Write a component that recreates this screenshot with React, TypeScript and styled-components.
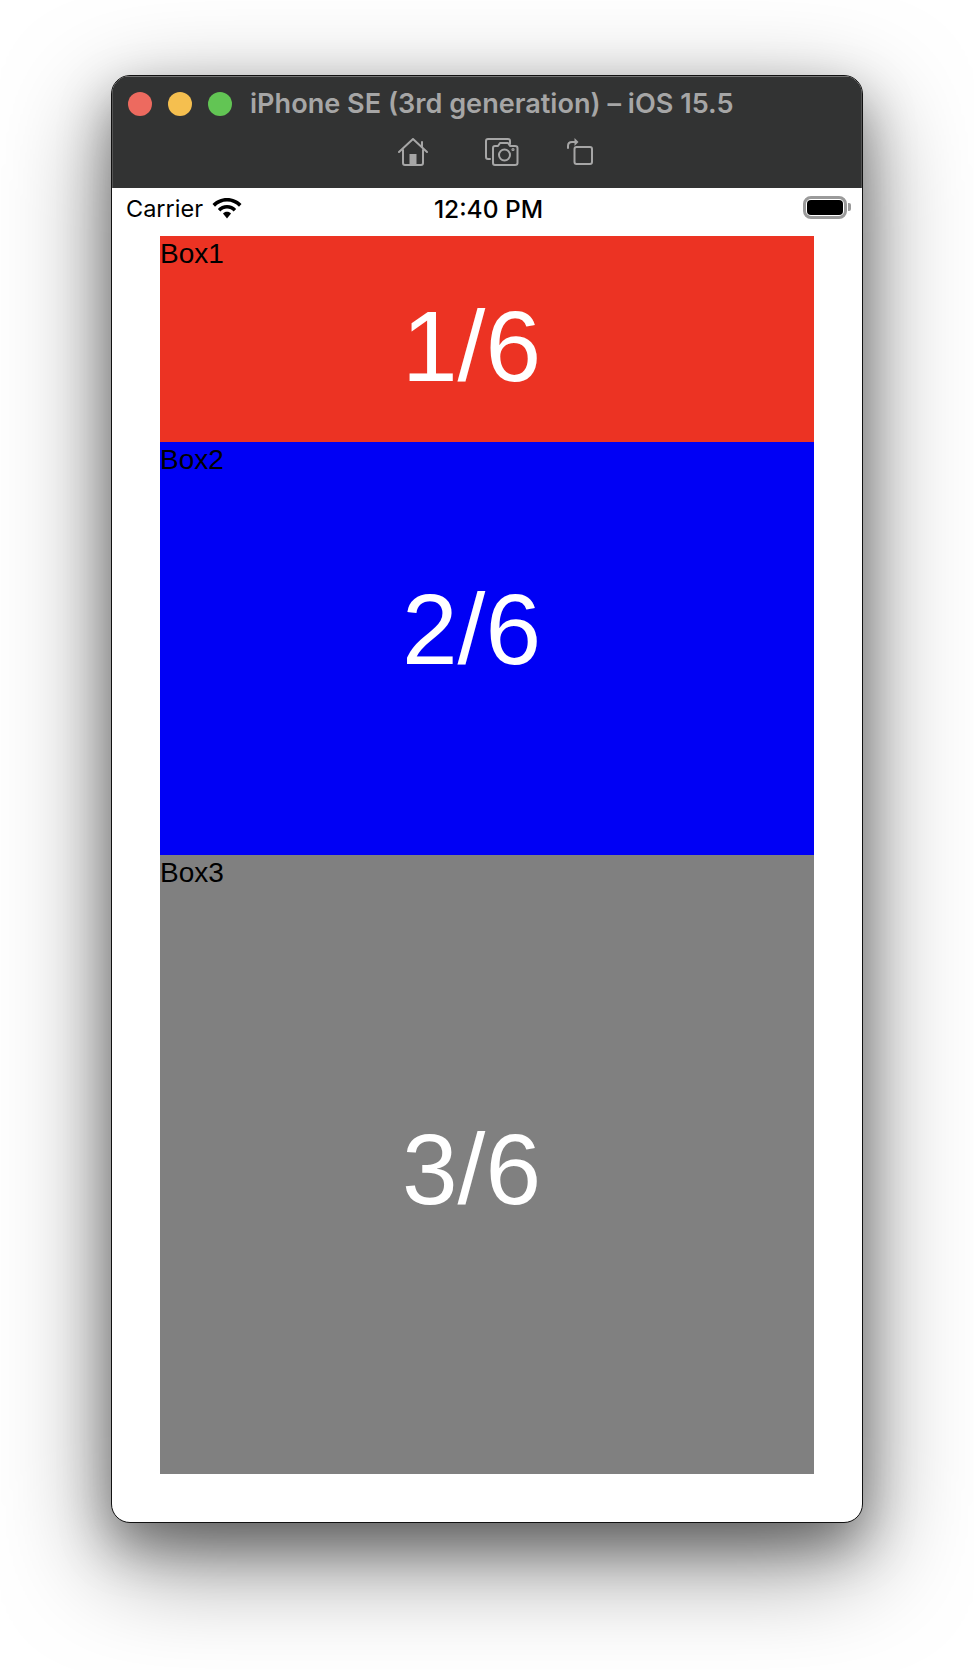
import React from "react";
import styled, { createGlobalStyle } from "styled-components";

const Global = createGlobalStyle`
  html, body { margin: 0; padding: 0; background: #fff; }
  body { width: 974px; height: 1670px; overflow: hidden; }
`;

const Page = styled.div`
  width: 974px;
  height: 1670px;
  box-sizing: border-box;
  padding: 75px 111px 147px 111px;
  display: flex;
`;

const Device = styled.div`
  flex: 1;
  display: flex;
  flex-direction: column;
  border-radius: 19px;
  overflow: hidden;
  background: #fff;
  box-sizing: border-box;
  border: 1px solid #111;
  box-shadow: 0 36px 105px rgba(0, 0, 0, 0.5), 0 22px 50px rgba(0, 0, 0, 0.34);
`;

const Header = styled.header`
  height: 112px;
  background: #323333;
  box-shadow: inset 0 1px 0 #757575, inset 1px 0 0 #555, inset -1px 0 0 #555;
  display: flex;
  flex-direction: column;
  flex-shrink: 0;
`;

const TitleRow = styled.div`
  display: flex;
  align-items: center;
  padding: 16px 0 0 16px;
  height: 24px;
`;

const Light = styled.span<{ $color: string }>`
  width: 24px;
  height: 24px;
  border-radius: 50%;
  background: ${(p) => p.$color};
  margin-right: 16px;
`;

const Title = styled.div`
  margin: -1px 0 0 2px;
  font: 600 27.1px/24px Inter, "Liberation Sans", sans-serif;
  color: #a6a6a6;
  white-space: nowrap;
`;

const Tools = styled.div`
  display: flex;
  align-items: flex-start;
  padding: 22px 0 0 286px;
`;

const ToolIcon = styled.svg<{ $gap: number; $lift?: number }>`
  display: block;
  margin-right: ${(p) => p.$gap}px;
  margin-top: ${(p) => -(p.$lift ?? 0)}px;
  fill: none;
  stroke: #a6a6a6;
  stroke-width: 2;
  stroke-linejoin: round;
  stroke-linecap: round;
`;

const Screen = styled.main`
  flex: 1;
  display: flex;
  flex-direction: column;
  padding: 0 48px 48px 48px;
  min-height: 0;
`;

const StatusBar = styled.div`
  height: 48px;
  box-sizing: border-box;
  margin: 0 -48px;
  padding: 0 11px 8px 14px;
  flex-shrink: 0;
  display: grid;
  grid-template-columns: 1fr auto 1fr;
  align-items: center;
  color: #000;
  font-family: Inter, "Liberation Sans", sans-serif;
`;

const StatusLeft = styled.div`
  display: flex;
  align-items: center;
  gap: 9px;
  font-size: 23.5px;
  font-weight: 400;
`;

const Time = styled.div`
  font-size: 24.5px;
  font-weight: 500;
  margin-top: 2px;
`;

const BatteryWrap = styled.div`
  justify-self: end;
  display: flex;
  align-items: center;
  gap: 1px;
  margin-top: -2px;
`;

const Battery = styled.div`
  width: 44px;
  height: 23px;
  box-sizing: border-box;
  border: 3px solid #9a9a9a;
  border-radius: 8px;
  padding: 1px;
  display: flex;
`;

const BatteryFill = styled.div`
  flex: 1;
  background: #000;
  border-radius: 4px;
`;

const BatteryNub = styled.div`
  width: 3px;
  height: 8px;
  background: #9a9a9a;
  border-radius: 0 2px 2px 0;
`;

const WifiIcon = styled.svg`
  display: block;
  margin-top: 2px;
`;

const Box = styled.section<{ $color: string; $grow: number }>`
  flex: ${(p) => p.$grow} 1 0;
  background: ${(p) => p.$color};
  position: relative;
  min-height: 0;
  display: flex;
  align-items: center;
  justify-content: center;
`;

const BoxLabel = styled.div`
  position: absolute;
  top: 0;
  left: 0;
  font: 400 28px/36px "Liberation Sans", Arial, sans-serif;
  color: #000;
`;

const Fraction = styled.div<{ $shift: number }>`
  font: 400 100px/110px "Liberation Sans", Arial, sans-serif;
  color: #fff;
  margin-right: 31px;
  margin-top: ${(p) => p.$shift}px;
`;

const HomeIcon = () => (
  <ToolIcon $gap={57} width="30" height="28" viewBox="0 0 30 28">
    <path d="M1 14 L15 1 L29 14" />
    <path d="M24 4 V9" />
    <path d="M5 12 V25 Q5 27 7 27 H23 Q25 27 25 25 V12" />
    <rect x="11.5" y="16" width="7" height="11" fill="#a6a6a6" stroke="none" />
  </ToolIcon>
);

const CameraIcon = () => (
  <ToolIcon $gap={48} width="34" height="28" viewBox="0 0 34 28">
    <path d="M5 21 H3 Q1 21 1 19 V3 Q1 1 3 1 H23 Q25 1 25 3 V6" />
    <path d="M8 10 Q8 8 10 8 H13 L15 5 H23 L25 8 H30 Q32.500 8 32.500 10 V25 Q32.500 27 30 27 H10 Q8 27 8 25 Z" />
    <circle cx="19.500" cy="17" r="5.500" />
    <circle cx="28" cy="11.500" r="0.600" />
  </ToolIcon>
);

const RotateIcon = () => (
  <ToolIcon $gap={0} $lift={1} width="27" height="29" viewBox="0 0 27 29">
    <rect x="7.500" y="10" width="17.500" height="17" rx="2" />
    <path d="M1 11 V9 Q1 5 5 5 H8" />
    <path d="M7.500 1 L11.500 5 L7.500 9 Z" fill="#a6a6a6" stroke="none" />
  </ToolIcon>
);

const Wifi = () => (
  <WifiIcon width="30" height="22" viewBox="0 0 30 22">
    <path d="M15 0 C9 0 4 2.400 0.500 6 L3 8.700 C6 5.600 10.300 3.600 15 3.600 C19.700 3.600 24 5.600 27 8.700 L29.500 6 C26 2.400 21 0 15 0 Z" />
    <path d="M15 7 C11.400 7 8.200 8.400 5.800 10.900 L8.300 13.500 C10 11.700 12.400 10.600 15 10.600 C17.600 10.600 20 11.700 21.700 13.500 L24.200 10.900 C21.800 8.400 18.600 7 15 7 Z" />
    <path d="M15 13.800 C13.400 13.800 12 14.400 11 15.500 L15 20.500 L19 15.500 C18 14.400 16.600 13.800 15 13.800 Z" />
  </WifiIcon>
);

const boxes = [
  { label: "Box1", text: "1/6", color: "#ec3323", grow: 1, shift: 14 },
  { label: "Box2", text: "2/6", color: "#0000f5", grow: 2, shift: -40 },
  { label: "Box3", text: "3/6", color: "#808080", grow: 3, shift: 8 },
];

export default function App() {
  return (
    <Page>
      <Global />
      <Device>
        <Header>
          <TitleRow>
            <Light $color="#ed6a5f" />
            <Light $color="#f5bf4f" />
            <Light $color="#62c554" />
            <Title>iPhone SE (3rd generation) – iOS 15.5</Title>
          </TitleRow>
          <Tools>
            <HomeIcon />
            <CameraIcon />
            <RotateIcon />
          </Tools>
        </Header>
        <Screen>
          <StatusBar>
            <StatusLeft>
              <span>Carrier</span>
              <Wifi />
            </StatusLeft>
            <Time>12:40 PM</Time>
            <BatteryWrap>
              <Battery>
                <BatteryFill />
              </Battery>
              <BatteryNub />
            </BatteryWrap>
          </StatusBar>
          {boxes.map((b) => (
            <Box key={b.label} $color={b.color} $grow={b.grow}>
              <BoxLabel>{b.label}</BoxLabel>
              <Fraction $shift={b.shift}>{b.text}</Fraction>
            </Box>
          ))}
        </Screen>
      </Device>
    </Page>
  );
}
